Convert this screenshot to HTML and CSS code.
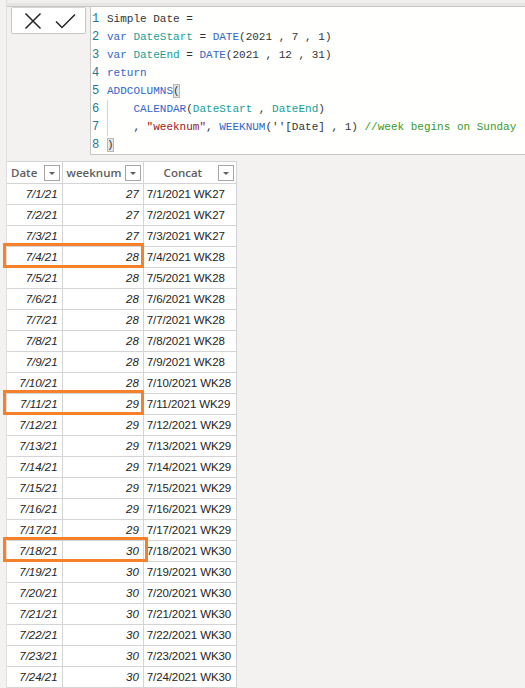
FILE: index.html
```html
<!DOCTYPE html>
<html>
<head>
<meta charset="utf-8">
<link rel="stylesheet" href="styles.css">
</head>
<body>
<div class="app">
  <div class="topbar"></div>
  <div class="formula">
    <div class="actions">
      <div class="btnbox">
        <svg class="ico" width="75" height="27" viewBox="0 0 75 27">
          <path d="M14.5 6.5 L29.5 21.5 M29.5 6.5 L14.5 21.5" stroke="#252423" stroke-width="1.5" fill="none"/>
          <path d="M45 14.5 L51 20.5 L64 7.5" stroke="#252423" stroke-width="1.5" fill="none"/>
        </svg>
      </div>
    </div>
    <div class="editor">
      <div class="line"><span class="ln">1</span><span class="code">Simple Date =</span></div>
      <div class="line"><span class="ln">2</span><span class="code"><span class="kw">var</span> <span class="vr">DateStart</span> = <span class="fn">DATE</span>(2021 , 7 , 1)</span></div>
      <div class="line"><span class="ln">3</span><span class="code"><span class="kw">var</span> <span class="vr">DateEnd</span> = <span class="fn">DATE</span>(2021 , 12 , 31)</span></div>
      <div class="line"><span class="ln">4</span><span class="code"><span class="kw">return</span></span></div>
      <div class="line"><span class="ln">5</span><span class="code"><span class="fn">ADDCOLUMNS</span><span class="br">(</span></span></div>
      <div class="line"><span class="ln">6</span><span class="code guide">    <span class="fn">CALENDAR</span>(<span class="vr">DateStart</span> , <span class="vr">DateEnd</span>)</span></div>
      <div class="line"><span class="ln">7</span><span class="code guide">    , <span class="st">"weeknum"</span>, <span class="fn">WEEKNUM</span>(''[Date] , 1) <span class="cm">//week begins on Sunday</span></span></div>
      <div class="line"><span class="ln">8</span><span class="code"><span class="br">)</span></span></div>
    </div>
  </div>
  <div class="tablewrap">
    <table class="grid">
      <thead>
        <tr>
          <th class="c1"><div class="hd"><span class="ht">Date</span><span class="dd"></span></div></th>
          <th class="c2"><div class="hd"><span class="ht">weeknum</span><span class="dd"></span></div></th>
          <th class="c3"><div class="hd"><span class="ht center">Concat</span><span class="dd"></span></div></th>
        </tr>
      </thead>
      <tbody>
        <tr><td class="d">7/1/21</td><td class="n">27</td><td class="t">7/1/2021 WK27</td></tr>
        <tr><td class="d">7/2/21</td><td class="n">27</td><td class="t">7/2/2021 WK27</td></tr>
        <tr><td class="d">7/3/21</td><td class="n">27</td><td class="t">7/3/2021 WK27</td></tr>
        <tr><td class="d">7/4/21</td><td class="n">28</td><td class="t">7/4/2021 WK28</td></tr>
        <tr><td class="d">7/5/21</td><td class="n">28</td><td class="t">7/5/2021 WK28</td></tr>
        <tr><td class="d">7/6/21</td><td class="n">28</td><td class="t">7/6/2021 WK28</td></tr>
        <tr><td class="d">7/7/21</td><td class="n">28</td><td class="t">7/7/2021 WK28</td></tr>
        <tr><td class="d">7/8/21</td><td class="n">28</td><td class="t">7/8/2021 WK28</td></tr>
        <tr><td class="d">7/9/21</td><td class="n">28</td><td class="t">7/9/2021 WK28</td></tr>
        <tr><td class="d">7/10/21</td><td class="n">28</td><td class="t">7/10/2021 WK28</td></tr>
        <tr><td class="d">7/11/21</td><td class="n">29</td><td class="t">7/11/2021 WK29</td></tr>
        <tr><td class="d">7/12/21</td><td class="n">29</td><td class="t">7/12/2021 WK29</td></tr>
        <tr><td class="d">7/13/21</td><td class="n">29</td><td class="t">7/13/2021 WK29</td></tr>
        <tr><td class="d">7/14/21</td><td class="n">29</td><td class="t">7/14/2021 WK29</td></tr>
        <tr><td class="d">7/15/21</td><td class="n">29</td><td class="t">7/15/2021 WK29</td></tr>
        <tr><td class="d">7/16/21</td><td class="n">29</td><td class="t">7/16/2021 WK29</td></tr>
        <tr><td class="d">7/17/21</td><td class="n">29</td><td class="t">7/17/2021 WK29</td></tr>
        <tr><td class="d">7/18/21</td><td class="n">30</td><td class="t">7/18/2021 WK30</td></tr>
        <tr><td class="d">7/19/21</td><td class="n">30</td><td class="t">7/19/2021 WK30</td></tr>
        <tr><td class="d">7/20/21</td><td class="n">30</td><td class="t">7/20/2021 WK30</td></tr>
        <tr><td class="d">7/21/21</td><td class="n">30</td><td class="t">7/21/2021 WK30</td></tr>
        <tr><td class="d">7/22/21</td><td class="n">30</td><td class="t">7/22/2021 WK30</td></tr>
        <tr><td class="d">7/23/21</td><td class="n">30</td><td class="t">7/23/2021 WK30</td></tr>
        <tr><td class="d">7/24/21</td><td class="n">30</td><td class="t">7/24/2021 WK30</td></tr>
        <tr><td class="d"></td><td class="n"></td><td class="t"></td></tr>
      </tbody>
    </table>
    <div class="mark m1"></div>
    <div class="mark m2"></div>
    <div class="mark m3"></div>
  </div>
</div>
</body>
</html>
```
FILE: styles.css
```css
html, body {
  margin: 0;
  padding: 0;
}
body {
  width: 525px;
  height: 688px;
  overflow: hidden;
  background: #f3f2f1;
  font-family: "Liberation Sans", Arial, sans-serif;
}
.app {
  position: relative;
  height: 688px;
  margin-left: 6px;
  border-left: 1px solid #e1dfdd;
}
.topbar {
  height: 6px;
  background: linear-gradient(#f0efee 0 3px, #e6e5e4 3px);
  border-bottom: 1px solid #c8c6c4;
}
.formula {
  display: flex;
  height: 148px;
}
.actions {
  width: 83px;
  flex: none;
}
.btnbox {
  margin-left: 4px;
  width: 73px;
  height: 25px;
  background: #fff;
  border: 1px solid #c8c6c4;
  border-top-color: #d6d4d2;
  border-radius: 2px;
  box-sizing: content-box;
  overflow: hidden;
}
.ico {
  display: block;
  margin: -1px 0 0 -1px;
}
.editor {
  flex: 1;
  background: #fffffe;
  border-left: 1px solid #c8c6c4;
  border-bottom: 1px solid #c8c6c4;
  padding-top: 3px;
  font-family: "Liberation Mono", "DejaVu Sans Mono", monospace;
  font-size: 11px;
  color: #333;
}
.line {
  display: flex;
  height: 18px;
  line-height: 18px;
  white-space: pre;
}
.ln {
  width: 16px;
  padding-left: 1px;
  box-sizing: border-box;
  color: #237893;
  font-size: 12px;
}
.code {
  position: relative;
}
.guide::before {
  content: "";
  position: absolute;
  left: 0;
  top: 0;
  bottom: 0;
  border-left: 1px solid #d3d3d3;
}
.kw { color: #3266c9; }
.fn { color: #3266c9; }
.vr { color: #14a098; }
.st { color: #a31515; }
.cm { color: #3a9a1e; }
.br {
  display: inline-block;
  line-height: 14px;
  background: #e6e6e6;
  outline: 1px solid #b8b8b8;
  outline-offset: -1px;
}
.tablewrap {
  position: relative;
  margin-top: 6px;
}
.grid {
  border-collapse: collapse;
  background: #fff;
  table-layout: fixed;
  width: 230px;
}
.grid th, .grid td {
  border: 1px solid #d4d4d4;
  padding: 0;
  height: 20px;
  box-sizing: border-box;
  font-size: 11.5px;
  color: #252423;
  white-space: nowrap;
  overflow: hidden;
}
.grid th {
  height: 22px;
}
.grid tr:first-child th:first-child,
.grid td:first-child { border-left: 0; }
.c1 { width: 55px; }
.c2 { width: 81px; }
.c3 { width: 93px; }
.hd {
  display: flex;
  align-items: center;
  height: 21px;
  padding: 0 2px 0 4px;
}
.ht {
  flex: 1;
  text-align: left;
  font-family: "Open Sans", "Noto Sans", sans-serif;
  font-weight: 600;
  font-size: 11.5px;
  color: #605e5c;
}
.ht.center {
  text-align: center;
}
.dd {
  position: relative;
  width: 14px;
  height: 14px;
  border: 1px solid #a8a6a4;
  background: #fff;
  flex: none;
}
.dd::after {
  content: "";
  position: absolute;
  left: 4px;
  top: 6px;
  border-left: 3px solid transparent;
  border-right: 3px solid transparent;
  border-top: 3px solid #605e5c;
}
.grid td {
  height: 21px;
}
.d, .n {
  text-align: right;
  font-style: italic;
  padding-right: 4px !important;
}
.t {
  text-align: left;
  padding-left: 3px !important;
  letter-spacing: -0.1px;
}
.mark {
  position: absolute;
  border: 3px solid #f7802a;
  box-sizing: border-box;
  left: -4px;
  width: 141px;
  height: 25px;
}
.m1 { top: 82px; }
.m2 { top: 229px; }
.m3 { top: 376px; width: 145px; }
```
